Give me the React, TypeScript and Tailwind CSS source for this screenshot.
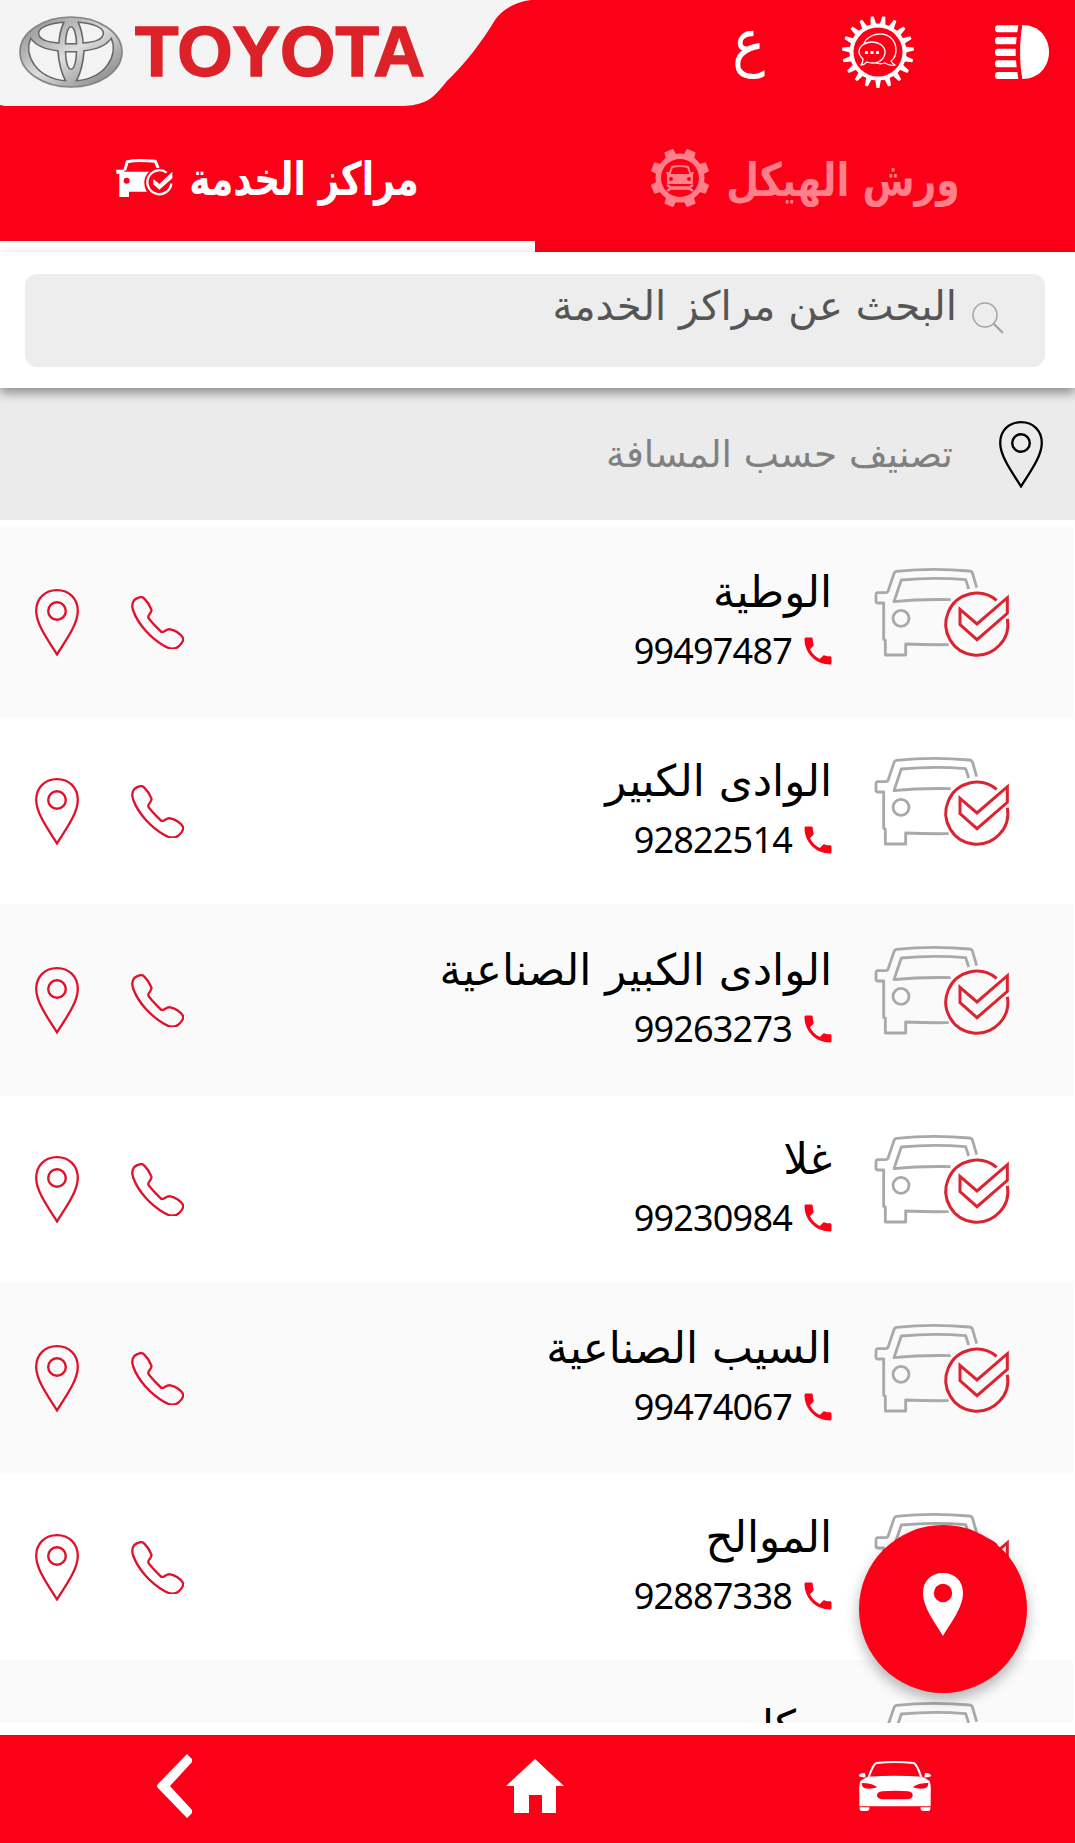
import { MdPhone } from "react-icons/md";

type ServiceCenter = {
    id: number
    name: string
    phone: string
}

const centers: ServiceCenter[] = [
    { id: 1, name: "الوطية", phone: "99497487" },
    { id: 2, name: "الوادى الكبير", phone: "92822514" },
    { id: 3, name: "الوادى الكبير الصناعية", phone: "99263273" },
    { id: 4, name: "غلا", phone: "99230984" },
    { id: 5, name: "السيب الصناعية", phone: "99474067" },
    { id: 6, name: "الموالح", phone: "92887338" },
    { id: 7, name: "بركا", phone: "99358471" },
]

// Builds a closed gear outline around (0, 0)
function gearPath(teeth: number, outer: number, root: number, tip: number, base: number) {
    const points: string[] = [];
    for (let i = 0; i < teeth; i++) {
        const mid = ((i + 0.5) / teeth) * Math.PI * 2 - Math.PI / 2;
        const corners = [[root, -base], [outer, -tip], [outer, tip], [root, base]];
        corners.forEach(([r, a]) => {
            const angle = mid + (a * Math.PI) / teeth;
            points.push(`${(r * Math.cos(angle)).toFixed(2)} ${(r * Math.sin(angle)).toFixed(2)}`);
        });
    }
    return `M${points.join("L")}Z`;
}

function ToyotaEmblem() {
    return (
        <svg className="w-[104px] h-[72px]" viewBox="55 48 302 216" preserveAspectRatio="none">
            <defs>
                <linearGradient id="chrome" x1="0" y1="0" x2="1" y2="1">
                    <stop offset="0" stopColor="#8a8a8a" />
                    <stop offset="0.3" stopColor="#b8b8b8" />
                    <stop offset="0.5" stopColor="#dedede" />
                    <stop offset="0.75" stopColor="#a8a8a8" />
                    <stop offset="1" stopColor="#7a7a7a" />
                </linearGradient>
            </defs>
            <ellipse cx="206" cy="156" rx="148" ry="105" fill="url(#chrome)" stroke="#858585" strokeWidth="5" />
            <g fill="#f3f3f3" stroke="#666666" strokeWidth="4.500">
                <path d="M112 99C112 82 145 70 185 67C177 85 172 108 171 129C140 127 112 118 112 99Z" />
                <path d="M300 99C300 82 267 70 227 67C235 85 240 108 241 129C272 127 300 118 300 99Z" />
                <path d="M206 80C196 80 190 110 190 131L222 131C222 110 216 80 206 80Z" />
                <path d="M190 155C190 180 196 208 206 208C216 208 222 180 222 155Z" />
                <path d="M89 115C68 165 105 235 190 242C176 215 170 180 168 152C130 148 103 135 89 115Z" />
                <path d="M323 115C344 165 307 235 222 242C236 215 242 180 244 152C282 148 309 135 323 115Z" />
            </g>
        </svg>
    )
}

function ChatGearIcon() {
    return (
        <svg className="w-[72px] h-[72px]" viewBox="-36 -36 72 72">
            <path d={gearPath(19, 36, 28, 0.25, 0.62)} fill="white" />
            <circle r="28.500" fill="white" />
            <circle r="24.500" fill="#fb0017" />
            <g fill="none" stroke="white" strokeWidth="1.3" strokeLinejoin="round">
                <path d="M-14 -9C-11 -15 -4 -18 2 -18C12 -18 18 -11 18 -2C18 3 16 7 13 9C14 11 15 12 17 13C13 14 10 13 7 11C4 12 1 12 -2 11" />
                <path d="M-6 -10C1 -10 7 -6 7 0C7 6 2 11 -5 11C-8 11 -9 11 -11 10C-13 12 -15 13 -17 13C-15 11 -15 10 -15 7C-17 5 -19 3 -19 0C-19 -6 -13 -10 -6 -10Z" />
            </g>
            <g fill="white">
                <rect x="-13" y="-1" width="3" height="3" />
                <rect x="-7.5" y="-1" width="3" height="3" />
                <rect x="-2" y="-1" width="3" height="3" />
            </g>
        </svg>
    )
}

function HeadlightIcon() {
    return (
        <svg className="w-[54px] h-[54px]" viewBox="0 0 162 162" fill="white">
            <path d="M82 0C132 0 162 38 162 81C162 124 132 162 82 162C73 110 73 52 82 0Z" />
            <path d="M8 1H70L67 22H8Q0 22 0 11.5Q0 1 8 1Z" />
            <path d="M8 36H65L63 58H8Q0 58 0 47Q0 36 8 36Z" />
            <path d="M8 71H62V93H8Q0 93 0 82Q0 71 8 71Z" />
            <path d="M8 106H63L65 127H8Q0 127 0 116.500Q0 106 8 106Z" />
            <path d="M8 141H67L70 162H8Q0 162 0 151.500Q0 141 8 141Z" />
        </svg>
    )
}

function ServiceTabIcon() {
    return (
        <svg className="w-[57px] h-[38px]" viewBox="0 0 171 114">
            <path d="M26 34L34 8Q62 2 118 7L127 28" fill="none" stroke="white" strokeWidth="9" />
            <path d="M0 32H27L24 38H112L86 66L92 98H39V114H10V45H2Z" fill="white" />
            <circle cx="32" cy="65" r="9" fill="#fb0017" />
            <circle cx="130" cy="71" r="45" fill="#fb0017" />
            <path d="M152 41A36 36 0 1 0 166 74" fill="none" stroke="white" strokeWidth="7" />
            <path d="M112 60L130 75L169 38V58L130 92L112 76Z" fill="white" />
        </svg>
    )
}

function BodyShopIcon() {
    return (
        <svg className="w-[60px] h-[60px]" viewBox="-30 -30 60 60">
            <path d={gearPath(8, 30, 24, 0.4, 0.58)} fill="#ff808b" />
            <circle r="24.500" fill="#ff808b" />
            <circle r="19" fill="#fb0017" />
            <path d="M-10 -5L-8 -11Q0 -13 8 -11L10 -5" fill="none" stroke="#ff808b" strokeWidth="2" />
            <path d="M-14 -6H-10L-9 -4H9L10 -6H14L13 -3V6H-13V-3Z" fill="#ff808b" />
            <circle cx="-9" cy="1" r="2" fill="#fb0017" />
            <circle cx="9" cy="1" r="2" fill="#fb0017" />
            <path d="M-10 10H10" stroke="#ff808b" strokeWidth="3.500" />
            <path d="M-13 7L-10 9V11L-13 13M13 7L10 9V11L13 13" fill="none" stroke="#ff808b" strokeWidth="2.500" />
        </svg>
    )
}

function PinOutline({ className }: { className: string }) {
    return (
        <svg className={className} viewBox="0 0 44 67" fill="none" stroke="currentColor">
            <path d="M22 65.500C15 54 1.200 36 1.200 22C1.200 9.500 10 1.200 22 1.200C34 1.200 42.800 9.500 42.800 22C42.800 36 29 54 22 65.500Z" strokeWidth="2.300" />
            <circle cx="22" cy="22" r="8.800" strokeWidth="2.400" />
        </svg>
    )
}

function PhoneOutline() {
    return (
        <svg className="w-[53px] h-[53px] text-[#e0112b]" viewBox="0 0 159 159" fill="none" stroke="currentColor" strokeWidth="7" strokeLinejoin="round">
            <path d="M10 12C18 5 33 -1 40 8C50 18 58 32 61 40C64 53 50 53 52 65C60 78 78 95 90 107C98 112 104 98 118 100C132 102 148 114 155 124C160 132 153 142 143 151C131 162 113 158 99 149C60 127 22 86 7 45C2 31 2 21 10 12Z" />
        </svg>
    )
}

function CarCheckIcon() {
    return (
        <svg className="w-[170px] h-[120px]" viewBox="0 0 510 360" fill="none">
            <g stroke="#a9a9a9" strokeWidth="8.500" strokeLinejoin="round">
                <path d="M350 113L337 68Q335 64 328 63Q217 53 109 64Q104 65 102 71L84 124Q82 128 77 128H52Q48 129 48 134V154Q48 159 54 159H71V268L76 271V315H137V282Q200 285 266 284" />
                <path d="M326 117L317 89Q220 81 124 90L102 155Q180 147 272 149" />
                <circle cx="123" cy="205" r="24" />
            </g>
            <g stroke="#dc2430" strokeWidth="9">
                <path d="M410 151A93 93 0 1 0 442 206" />
                <path d="M300 178L351 222L442 143V190L351 269L300 224Z" />
            </g>
        </svg>
    )
}

function SearchIcon() {
    return (
        <svg className="w-8 h-8" viewBox="0 0 32 32" fill="none" stroke="#a3a3a3">
            <circle cx="13" cy="13" r="12" strokeWidth="1.500" />
            <path d="M22 22L31 31" strokeWidth="2.200" />
        </svg>
    )
}

function CarFrontIcon() {
    return (
        <svg className="w-[72px] h-[50px]" viewBox="0 0 216 150">
            <path d="M29 49C38 22 43 10 52 6Q108 0 164 6C173 10 178 22 187 49" fill="none" stroke="white" strokeWidth="6" />
            <path d="M0 43Q4 35 18 36L20 49Q8 50 0 46ZM216 43Q212 35 198 36L196 49Q208 50 216 46Z" fill="white" />
            <path d="M26 47Q108 41 190 47L211 59Q217 70 215 100V136H1V100Q-1 70 5 59Z" fill="white" />
            <path d="M2 139H31V145Q29 150 24 150H8Q2 150 2 145ZM214 139H185V145Q187 150 192 150H208Q214 150 214 145Z" fill="white" />
            <g fill="#fb0017">
                <path d="M8 66Q40 66 55 79Q30 87 14 80Q8 75 8 66ZM208 66Q176 66 161 79Q186 87 202 80Q208 75 208 66Z" />
                <path d="M54 103Q54 93 70 91Q108 88 147 91Q161 93 161 103Q161 113 147 115H70Q54 113 54 103Z" />
            </g>
        </svg>
    )
}

function Header() {
    return (
        <header className="flex h-[106px] justify-between">
            <div className="relative h-full w-[532px]">
                {/* Slanted plate behind the logo */}
                <svg className="absolute inset-0" width="532" height="106" viewBox="0 0 532 106">
                    <path d="M0 0H531C516 2 502 9 495 20C482 42 463 66 447 81C438 92 432 99 424 102C416 105 410 106 400 106H5L0 105Z" fill="#f4f4f4" />
                </svg>
                <div className="relative flex items-center pt-4 pl-[19px]">
                    <ToyotaEmblem />
                    <svg className="ml-3 h-[72px] w-[292px] overflow-visible" viewBox="0 0 292 72">
                        <text x="0" y="60" textLength="290" lengthAdjust="spacingAndGlyphs" fill="#dc2228" stroke="#dc2228" strokeWidth="1.500" className="font-['Liberation_Sans',sans-serif] text-[70px] font-bold">TOYOTA</text>
                    </svg>
                </div>
            </div>
            <div className="flex items-start pt-4 pr-[26px] text-white">
                <span lang="ar" className="mr-[77px] h-[72px] scale-y-115 text-[55px] leading-[54px] font-['DejaVu_Sans',sans-serif]">ع</span>
                <ChatGearIcon />
                <span className="mt-[9px] ml-[81px]"><HeadlightIcon /></span>
            </div>
        </header>
    )
}

function Tabs() {
    return (
        <nav className="flex h-[146px] font-['DejaVu_Sans_Condensed','DejaVu_Sans',sans-serif] font-bold">
            <div className="flex h-full w-[535px] items-center justify-center gap-4 border-b-[11px] border-white pt-2 text-[40px] text-white">
                <ServiceTabIcon />
                <span dir="rtl" className="scale-y-115 pt-[3px]">مراكز الخدمة</span>
            </div>
            <div className="flex h-full flex-1 items-center justify-center gap-4 pb-[3px] text-[42px] text-[#ff808b]">
                <BodyShopIcon />
                <span dir="rtl" className="scale-y-110 pt-[3px]">ورش الهيكل</span>
            </div>
        </nav>
    )
}

function CenterRow({ center, shaded }: { center: ServiceCenter, shaded: boolean }) {
    return (
        <div className={`mr-[2px] flex shrink-0 items-start pr-[43px] pl-[35px] ${shaded ? "h-[192px] bg-[#fafafa] pt-6" : "h-[186px] bg-white pt-[21px]"}`}>
            <PinOutline className="mt-[39px] w-11 h-[67px] text-[#e0112b]" />
            <div className="mt-[46px] ml-[52px]"><PhoneOutline /></div>
            <div className="mr-7 flex-1 pt-3">
                <div dir="rtl" className="h-[62px] font-['DejaVu_Sans',sans-serif] text-[43.5px] leading-[61px] whitespace-nowrap">{center.name}</div>
                <div className="-mr-1 flex h-[54px] items-center justify-end gap-2">
                    <span className="font-['Noto_Sans',sans-serif] text-[36px] tracking-[-0.8px]">{center.phone}</span>
                    <MdPhone className="size-9 text-[#fb0017]" />
                </div>
            </div>
            <CarCheckIcon />
        </div>
    )
}

export default function App() {
    return (
        <div className="relative flex h-[1843px] w-[1075px] flex-col overflow-hidden bg-white text-black">
            <div className="bg-[#fb0017]">
                <Header />
                <Tabs />
            </div>

            {/* Search */}
            <div className="relative h-[136px] bg-white pt-[22px] pr-[30px] pl-[25px] shadow-[0_5px_10px_rgba(0,0,0,0.4)]">
                <div dir="rtl" className="flex h-[93px] rounded-xl bg-[#ededed] pr-[41px]">
                    <div className="mt-7"><SearchIcon /></div>
                    <span className="mr-[15px] font-['DejaVu_Sans',sans-serif] text-[40.3px] leading-[66px] text-[#555555]">البحث عن مراكز الخدمة</span>
                </div>
            </div>

            {/* Sort by distance */}
            <div dir="rtl" className="flex h-[132px] items-center bg-[#ebebeb] pr-8">
                <PinOutline className="w-11 h-[67px] text-black" />
                <span className="mr-[46px] font-['DejaVu_Sans',sans-serif] text-[37.4px] text-[#808080]">تصنيف حسب المسافة</span>
            </div>

            <div className="mt-[6px] flex h-[1197px] flex-col overflow-hidden">
                {centers.map((center, index) => (
                    <CenterRow key={center.id} center={center} shaded={index % 2 === 0} />
                ))}
            </div>

            <footer className="mt-3 flex h-[108px] items-start bg-[#fb0017]">
                <svg className="mt-[19px] ml-[157px] w-9 h-16" viewBox="0 0 36 64" fill="white">
                    <path d="M30 0L35 5V8L13 32L35 56V59L30 64L1 34Q-1 32 1 30Z" />
                </svg>
                <svg className="mt-6 ml-[313px] w-[58px] h-[54px]" viewBox="0 0 58 54" fill="white">
                    <path d="M29 0L58 27H50V54H36V36H23V54H8V27H0Z" />
                </svg>
                <div className="mt-[26px] ml-[295px]"><CarFrontIcon /></div>
            </footer>

            {/* Floating map button */}
            <button className="absolute top-[1525px] left-[859px] flex size-[168px] justify-center rounded-full bg-[#fb0017] pt-12 shadow-[0_6px_14px_rgba(0,0,0,0.3)]">
                <svg className="w-10 h-[63px]" viewBox="0 0 40 63">
                    <path d="M20 63C13 51 0 35 0 20C0 8 8 0 20 0C32 0 40 8 40 20C40 35 27 51 20 63Z" fill="white" />
                    <circle cx="20" cy="20" r="9.200" fill="#fb0017" />
                </svg>
            </button>
        </div>
    )
}
